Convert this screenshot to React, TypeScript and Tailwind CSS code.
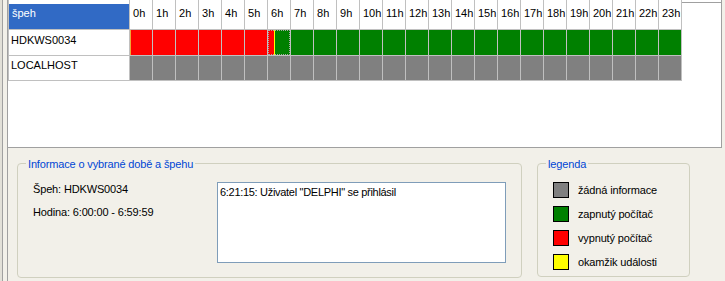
import React from "react";

const hours = Array.from({ length: 24 }, (_, i) => i);

const legend = [
  { color: "bg-[#808080]", label: "žádná informace" },
  { color: "bg-[#008000]", label: "zapnutý počítač" },
  { color: "bg-[#ff0000]", label: "vypnutý počítač" },
  { color: "bg-[#ffff00]", label: "okamžik události" },
];

function GroupBox({
  title,
  className,
  children,
}: {
  title: string;
  className: string;
  children: React.ReactNode;
}) {
  return (
    <div className={`relative rounded-[4px] border border-[#d0d0bf] ${className}`}>
      <span className="absolute -top-[6px] left-[8px] bg-[#f2f0e9] px-[2px] leading-[13px] text-[#0046d5]">
        {title}
      </span>
      {children}
    </div>
  );
}

function HostCell({ hour }: { hour: number }) {
  if (hour === 6) {
    return (
      <div className="relative flex">
        <div className="w-[6px] bg-[#ff0000]" />
        <div className="w-px bg-[#ffff00]" />
        <div className="flex-1 bg-[#008000]" />
        <div className="absolute inset-0 border border-dotted border-[#a8a8a8]" />
      </div>
    );
  }
  if (hour < 6) {
    return (
      <div className="flex bg-[#ff0000]">
        {hour === 0 && <div className="w-px bg-[#f0a838]" />}
      </div>
    );
  }
  return <div className="bg-[#008000]" />;
}

export default function App() {
  return (
    <div className="flex h-[281px] w-[725px] bg-[#f2f0e9] font-['Liberation_Sans',Arial,sans-serif] text-[11px] leading-[13px] text-black">
      {/* splitter on the left */}
      <div className="flex w-[8px] shrink-0">
        <div className="w-[2px] bg-[#e2e0d8]" />
        <div className="w-px bg-[#a0a0a0]" />
        <div className="w-[4px]" />
        <div className="w-px bg-[#a0a0a0]" />
      </div>

      <div className="flex flex-1 flex-col">
        {/* timeline grid */}
        <div className="flex h-[148px] w-[714px] border-b border-r border-[#a0a0a0] bg-white">
          <div className="grid grid-cols-[120px_repeat(24,22px)] grid-rows-[29px_25px_24px] gap-px self-start bg-[#c0c0c0] px-px pb-px">
            <div className="bg-white pt-[4px]">
              <div className="h-full bg-[#316ac5] pl-[3px] pt-[3px] text-white">špeh</div>
            </div>
            {hours.map((h) => (
              <div key={h} className="bg-white pl-[3px] pt-[7px]">
                {h}h
              </div>
            ))}

            <div className="bg-white pl-[2px] pt-[4px]">HDKWS0034</div>
            {hours.map((h) => (
              <HostCell key={h} hour={h} />
            ))}

            <div className="bg-white pl-[2px] pt-[3px]">LOCALHOST</div>
            {hours.map((h) => (
              <div key={h} className="bg-[#808080]" />
            ))}
          </div>
          <div className="mt-[2px] flex-1 self-start border-t border-[#a0a0a0]" />
        </div>

        {/* info + legend */}
        <div className="flex gap-[15px] pl-[9px] pt-[15px] tracking-[-0.15px]">
          <GroupBox title="Informace o vybrané době a špehu" className="flex h-[115px] w-[505px] pl-[15px] pt-[18px]">
            <div className="flex w-[184px] flex-col gap-[10px] pt-px">
              <div>Špeh: HDKWS0034</div>
              <div>Hodina: 6:00:00 - 6:59:59</div>
            </div>
            <div className="h-[81px] w-[289px] border border-[#7f9db9] bg-white pl-[2px] pt-[3px] tracking-[-0.3px]">
              6:21:15: Uživatel "DELPHI" se přihlásil
            </div>
          </GroupBox>

          <GroupBox title="legenda" className="flex h-[114px] w-[153px] flex-col gap-[8px] pl-[15px] pt-[18px]">
            {legend.map((item) => (
              <div key={item.label} className="flex h-[16px] items-center gap-[9px]">
                <div className={`h-[16px] w-[16px] border border-black ${item.color}`} />
                <span>{item.label}</span>
              </div>
            ))}
          </GroupBox>
        </div>
      </div>
    </div>
  );
}
